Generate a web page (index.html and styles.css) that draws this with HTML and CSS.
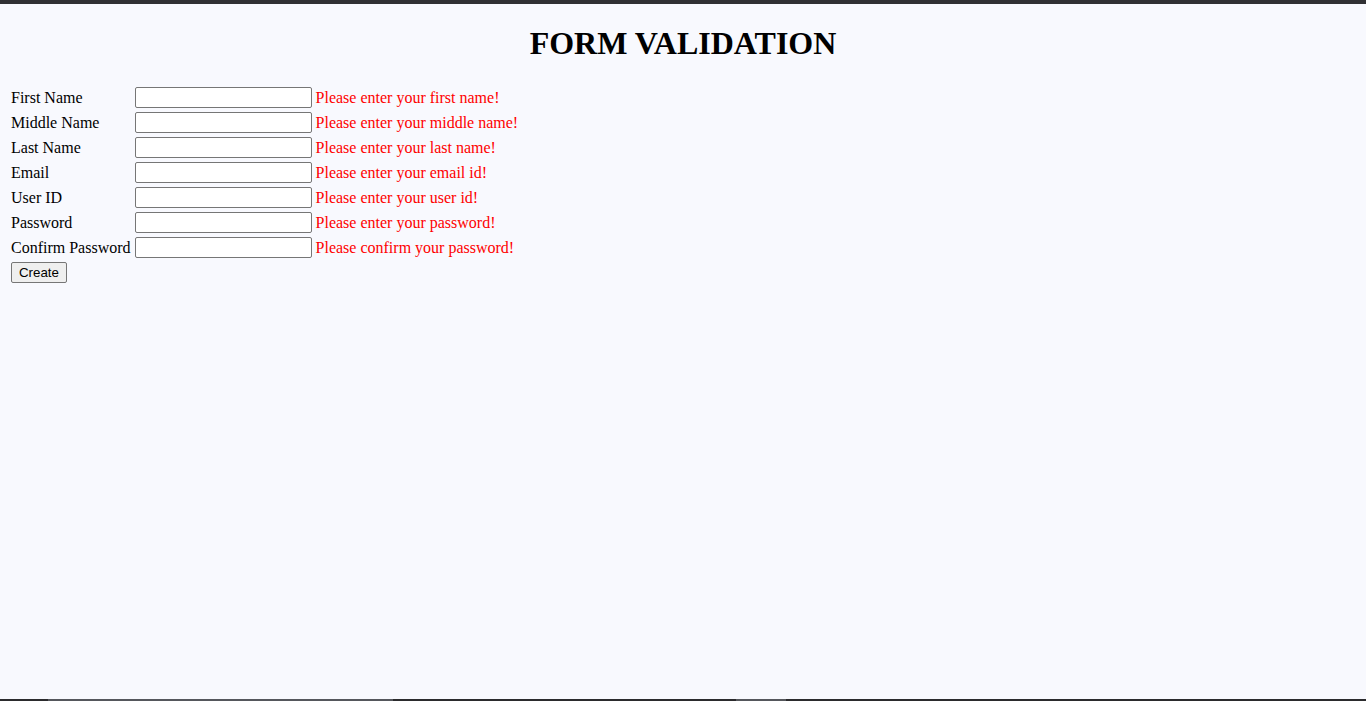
FILE: index.html
```html
<!DOCTYPE html>
<html lang="en">
<head>
<meta charset="utf-8">
<title>Form Validation</title>
<link rel="stylesheet" href="styles.css">
</head>
<body>
<div class="topbar"></div>
<main class="page">
  <h1 class="title">FORM VALIDATION</h1>
  <form class="form-grid">
    <label class="cell label">First Name</label>
    <div class="cell"><input class="field" type="text"></div>
    <div class="cell error">Please enter your first name!</div>

    <label class="cell label">Middle Name</label>
    <div class="cell"><input class="field" type="text"></div>
    <div class="cell error">Please enter your middle name!</div>

    <label class="cell label">Last Name</label>
    <div class="cell"><input class="field" type="text"></div>
    <div class="cell error">Please enter your last name!</div>

    <label class="cell label">Email</label>
    <div class="cell"><input class="field" type="text"></div>
    <div class="cell error">Please enter your email id!</div>

    <label class="cell label">User ID</label>
    <div class="cell"><input class="field" type="text"></div>
    <div class="cell error">Please enter your user id!</div>

    <label class="cell label">Password</label>
    <div class="cell"><input class="field" type="password"></div>
    <div class="cell error">Please enter your password!</div>

    <label class="cell label">Confirm Password</label>
    <div class="cell"><input class="field" type="password"></div>
    <div class="cell error">Please confirm your password!</div>

    <div class="cell button-cell"><button class="btn" type="button">Create</button></div>
  </form>
</main>
<div class="bottombar">
  <span class="thumb thumb-a"></span>
  <span class="thumb thumb-b"></span>
</div>
</body>
</html>
```

FILE: styles.css
```css
html, body {
  margin: 0;
  padding: 0;
  height: 100%;
}

body {
  background: #f8f9fe;
  font-family: "Liberation Serif", "Times New Roman", serif;
  font-size: 16px;
  color: #000;
  display: flex;
  flex-direction: column;
  overflow: hidden;
}

.topbar {
  height: 4px;
  background: #303034;
  flex: none;
}

.page {
  flex: 1;
  padding: 21px 8px 0;
}

.title {
  margin: 0 0 22px;
  text-align: center;
  font-size: 32px;
  font-weight: bold;
  line-height: 37px;
}

.form-grid {
  display: grid;
  grid-template-columns: max-content max-content max-content;
  gap: 2px;
  padding: 2px;
  align-items: center;
}

.cell {
  padding: 1px;
  line-height: 18px;
}

.label {
  white-space: nowrap;
}

.error {
  color: #ff0000;
  white-space: nowrap;
}

.field {
  display: block;
  box-sizing: border-box;
  width: 177px;
  height: 21px;
  margin: 0;
  padding: 1px 2px;
  border: 1px solid #767676;
  border-radius: 2px;
  background: #fff;
  font-family: "Liberation Sans", Arial, sans-serif;
  font-size: 13.33px;
}

.button-cell {
  grid-column: 1 / 2;
}

.btn {
  display: block;
  box-sizing: border-box;
  width: 56px;
  height: 21px;
  margin: 0;
  padding: 1px 6px;
  border: 1px solid #767676;
  border-radius: 2px;
  background: #efefef;
  color: #000;
  font-family: "Liberation Sans", Arial, sans-serif;
  font-size: 13.33px;
}

.bottombar {
  flex: none;
  height: 2px;
  background: #2b2b2d;
  position: relative;
}

.thumb {
  position: absolute;
  top: 0;
  height: 2px;
  background: #55575c;
}

.thumb-a {
  left: 48px;
  width: 345px;
}

.thumb-b {
  left: 736px;
  width: 50px;
}
```
